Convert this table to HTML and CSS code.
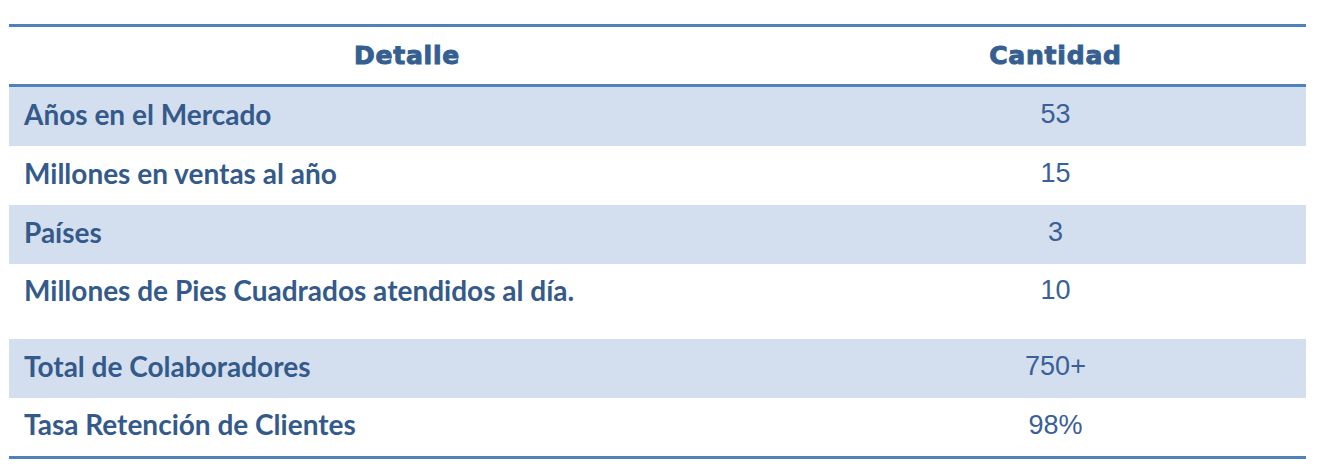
FILE: index.html
```html
<!DOCTYPE html>
<html lang="es">
<head>
<meta charset="utf-8">
<title>Detalle</title>
<link rel="stylesheet" href="styles.css">
</head>
<body>
<div class="wrap">
<table class="stats">
  <thead>
    <tr>
      <th class="col-detail">Detalle</th>
      <th class="col-qty">Cantidad</th>
    </tr>
  </thead>
  <tbody>
    <tr class="shade"><td class="label">Años en el Mercado</td><td class="value">53</td></tr>
    <tr><td class="label">Millones en ventas al año</td><td class="value">15</td></tr>
    <tr class="shade"><td class="label">Países</td><td class="value">3</td></tr>
    <tr class="tall"><td class="label">Millones de Pies Cuadrados atendidos al día.</td><td class="value">10</td></tr>
    <tr class="shade"><td class="label">Total de Colaboradores</td><td class="value">750+</td></tr>
    <tr class="last"><td class="label">Tasa Retención de Clientes</td><td class="value">98%</td></tr>
  </tbody>
</table>
</div>
</body>
</html>
```
FILE: styles.css
```css
html, body {
  margin: 0;
  padding: 0;
  background: #ffffff;
}

.wrap {
  padding: 24px 16px 0 9px;
}

.stats {
  width: 1297px;
  border-collapse: collapse;
  border-top: 3px solid #4f81bd;
  border-bottom: 3px solid #4f81bd;
  color: #365f91;
}

.stats th {
  height: 57px;
  padding: 0;
  font-family: "DejaVu Sans", sans-serif;
  font-weight: bold;
  font-size: 25px;
  letter-spacing: 0.8px;
  -webkit-text-stroke: 1px #365f91;
  text-align: center;
  vertical-align: middle;
  border-bottom: 3px solid #4f81bd;
  color: #365f91;
}

.col-detail {
  width: 796px;
}

.stats td {
  height: 59px;
  padding: 0;
  vertical-align: middle;
}

.stats tr.shade td {
  background: #d3dfee;
}

.label {
  padding-left: 15px !important;
  font-family: "Lato", "Open Sans", sans-serif;
  font-weight: bold;
  font-size: 28px;
  color: #345a8c;
}

.stats td.label {
  height: 53px;
  padding-bottom: 6px;
}

.stats td.value {
  height: 55px;
  padding-bottom: 4px;
}

.stats tr.last td.label {
  height: 52px;
}

.stats tr.last td.value {
  height: 54px;
}

.stats tr.tall td {
  height: 64px;
  vertical-align: top;
  padding-top: 11px;
  padding-bottom: 0;
}

.stats tr.tall td.label {
  height: 66px;
  padding-top: 9px;
}

.value {
  text-align: center;
  font-family: "Liberation Sans", Arial, sans-serif;
  font-size: 27px;
  color: #3a6099;
}
```
